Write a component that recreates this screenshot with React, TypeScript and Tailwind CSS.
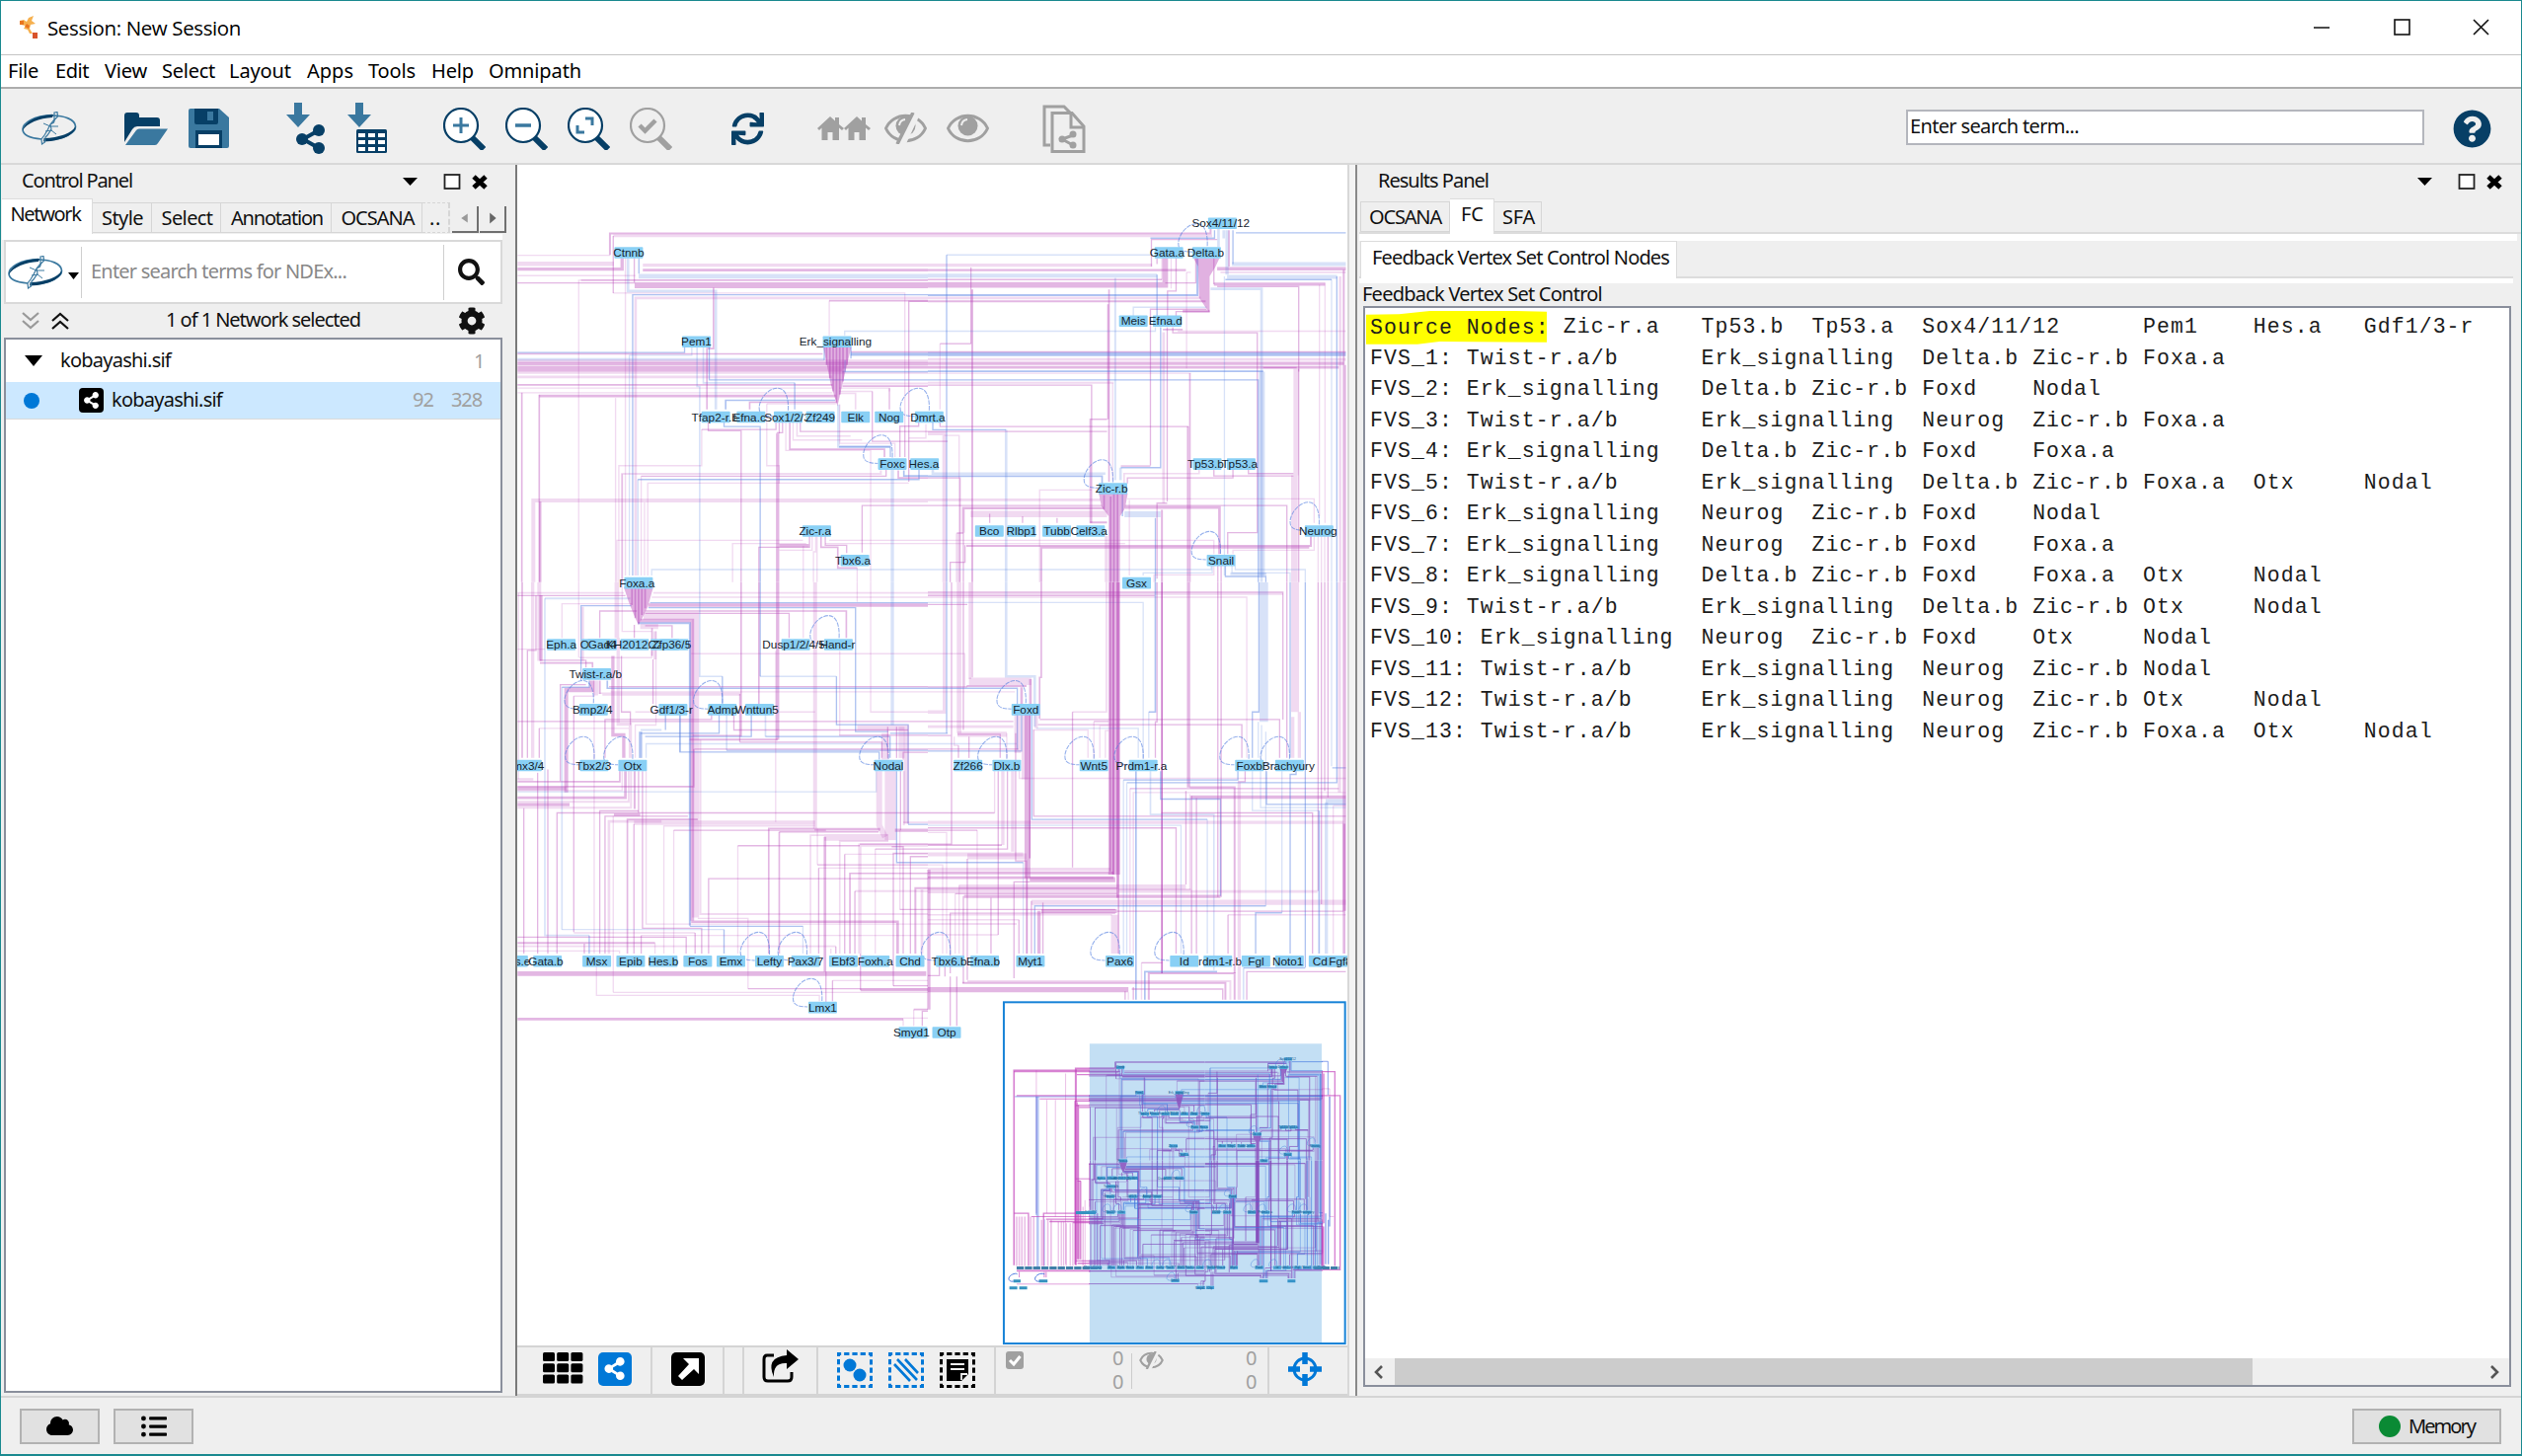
import React, { useLayoutEffect, useRef } from "react";
import { FaShareAlt, FaCloud, FaListUl, FaCog, FaSearch, FaQuestionCircle, FaSync } from "react-icons/fa";

/* ---------- text fitted to a fixed run length ---------- */
function T({ w, children, className = "" }: { w: number; children: string; className?: string }) {
  const ref = useRef<HTMLSpanElement>(null);
  useLayoutEffect(() => {
    const el = ref.current;
    if (!el) return;
    el.style.letterSpacing = "0px";
    const natural = el.getBoundingClientRect().width;
    el.style.letterSpacing = `${(w - natural) / Math.max(1, children.length)}px`;
  }, [w, children]);
  return (
    <span ref={ref} className={`inline-block whitespace-pre leading-none ${className}`}>
      {children}
    </span>
  );
}

/* ---------- network drawing data ---------- */
const NW = [
  "q6 M293 265V200H1290", "p8 M303 207H1290", "q3 M303 207V381", "p3 M303 381H1190V880", "p3 M12 266H293", "p14 M12 292H305",
  "q10 M12 308H330V275", "p3 M12 328H370", "q4 M12 350H365", "p10 M393 296H1290", "q8 M393 311H1290", "b14 M380 330H1290",
  "p4 M198 1290V342H1290", "q4 M205 342H1290", "q18 M368 357H1290", "p3 M340 275V1240", "b8 M348 275V375H615V735", "c4 M362 1240V386H1290",
  "p8 M371 1240V396H1290", "p3 M960 510V404", "q5 M960 404H1290", "q4 M1202 955V406H1290", "q5 M608 365V550H588V735",
  "c4 M381 275V322", "q4 M367 275V352", "b3 M1007 510V497H1290", "c4 M12 562H520V545", "q4 M12 566H940", "b4 M352 1240V570H542V545",
  "c10 M1025 567H1290", "q3 M1025 560H1290", "b8 M12 583H945", "p10 M12 588H1290", "q10 M12 596H1290", "q18 M12 612H1000", "q8 M1000 607H1290",
  "p5 M12 624H1290", "c3 M1000 620H1290", "p8 M12 636H970", "q5 M12 660H970", "p3 M12 670H970", "p3 M12 684H970", "q8 M78 694H980",
  "q5 M25 1290V684", "q5 M78 1290V690", "q5 M1000 664H1265V735", "p6 M1000 656H1290", "p3 M990 670H1143V680", "q4 M1143 670V735", "p5 M990 686H1040V735", "q4 M1091 680V832H1290",
  "p3 M990 680H1091", "c3 M595 545V645H1290", "b5 M577 545V654H855", "c4 M855 654V735", "b5 M558 545V665H566V1290", "c5 M645 735V707H978",
  "q5 M718 735V713H980", "p3 M770 718V906H808V960", "p3 M770 718H980", "b8 M988 720V848H1146", "c4 M990 849H1146V880", "p4 M992 720V838H1160V880",
  "q4 M798 775V796H572", "p4 M572 796V906H320V1290", "q10 M803 808V1290", "q4 M818 775V806H800", "q4 M808 775V808", "p4 M828 775V860H1086V1290", "q5 M840 775V856H1128V880",
  "p4 M850 775V828H1060", "p5 M862 775V816H1025", "q4 M872 775V802H1290", "p4 M1254 780V822H1202", "q4 M592 775V800H692V1290", "c4 M640 775V787H750V1290",
  "q3 M1175 880V786H1232V775", "p3 M1190 786V880", "p6 M330 1260V931H1117V920", "q4 M388 938H1133V915", "p3 M388 1240V938", "q5 M1170 920V943H1290",
  "c4 M378 948H1233V915", "b5 M378 1240V948", "c5 M1187 920V937H1290", "p4 M408 1240V959H1202", "b10 M1152 915V1290", "p12 M60 1290V1012H1290",
  "p3 M398 1240V1018", "q7 M81 1290V1015", "q4 M1060 1170V1027H1290", "p4 M314 1290V1133H880", "p3 M310 1290V700", "p3 M960 1133H1290", "p3 M666 1290V1143H890",
  "p3 M948 1143H1290", "q4 M746 1290V1154H900V1120", "q10 M808 1149H898", "p4 M908 1120V1163H808", "p4 M881 1290V1150", "p3 M912 1290V1168H919V1120",
  "p3 M923 1290V1120", "q5 M935 1120V1154H986V1217H1045", "q4 M948 1120V1148H1013V1172", "p4 M1045 1217V1290", "b3 M420 1240V1222H1290", "p3 M330 931V1290",
  "c4 M945 545V585", "c4 M1026 545V580", "c3 M1008 585V620",
];
const NE = [
  "q6 M0 200H860V185", "p8 M0 207H865", "c4 M937 198H1272", "c4 M677 214H872V190", "q3 M680 300V218H880", "b8 M900 190V215M884 185V240", "p10 M0 296H682", "q4 M697 275V293",
  "q7 M0 311H785", "b3 M57 265H677", "c4 M57 265V1290", "q3 M131 535V303", "q3 M37 535H131", "p3 M37 535V735", "q6 M135 1290V370", "b12 M0 328H697", "q5 M0 340H712", "p3 M712 275V340",
  "q17 M0 356H722V275", "q4 M722 350H815V275", "p4 M740 275V367", "q3 M755 275V375H729V450", "c6 M0 387H820V275", "p8 M0 396H830", "q6 M0 406H845", "q8 M857 436H775", "q4 M755 450V437H857", "b4 M625 450V424H848",
  "q4 M677 905V430H848", "c4 M697 325V450", "q5 M548 765V415", "q5 M551 370V955", "b6 M570 335V950", "b12 M925 293H1272", "c4 M928 190V293", "q10 M880 307H1272", "p5 M890 318H1272", "b10 M910 190V325", "q5 M916 190V300", "b12 M910 332H1245",
  "c3 M905 340H1228", "b4 M1228 340V1290", "q10 M870 354H1208", "q4 M870 275V354", "p3 M1208 350V1080", "p3 M1191 356V1060", "q4 M880 361H1128V620", "b8 M860 368H1015V1260", "p4 M787 318V610", "p3 M787 318H800",
  "b3 M0 497H692V485", "p3 M760 497H1272", "q4 M745 485V502H1002V1110H912V1175", "q5 M715 492H775", "c12 M0 567H1272", "q3 M0 560H1272", "p8 M0 583H1272", "q10 M0 595H1265", "q8 M0 607H1250", "c5 M0 619H1020", "p4 M0 625H800",
  "c4 M1244 330V1290", "p8 M1254 330V1290", "q6 M1265 310V600", "q12 M1268 600V1290", "q4 M1020 608H1122", "p16 M1120 612V935", "q3 M1128 612V1290", "c4 M0 645H1005V1290", "b18 M1016 620V1240", "p6 M0 654H565", "q4 M0 661H498V1080", "p4 M562 655V950",
  "b4 M902 330V1240", "q5 M797 625V1290", "q6 M791 787V1290", "q4 M37 775V787H793", "c4 M15 775V797H238", "b8 M238 797V1290", "q4 M0 802H545", "p12 M0 808H50V1290", "p3 M95 1290V814H50", "q3 M0 832H60", "q5 M494 1080V765H545", "c4 M708 485V912H587", "b8 M586 912V950",
  "q3 M587 907H677", "q4 M728 485V1015", "p8 M717 500V1020", "c5 M0 938H530V960", "b8 M15 915V930H540", "q4 M0 943H98V1290", "p3 M340 1290V980H498", "p5 M597 960V930H825V915", "q4 M607 960V943H928V915", "q3 M870 915V937H1112", "q3 M975 915V930H1112", "p20 M1115 935V1290",
  "p8 M0 1010H525", "p4 M607 1007H1175V1080", "q4 M0 1027H530", "q4 M600 1027H1092V1290", "q8 M108 1110V1035H535", "q8 M600 1033H887V1175", "p20 M130 1053H545", "q3 M188 1052V1080", "q3 M288 1060V1080", "q3 M393 1065V1080", "q6 M493 1079H545", "c3 M592 990V1060", "b18 M598 1054H708",
  "c4 M692 1065V1290", "q6 M712 1040V1290", "q4 M697 1250V1020H728", "p3 M613 1240V1010", "p3 M0 1133H870V1175", "p3 M0 1143H600", "q6 M117 1150H1165V1120", "q6 M345 1290V1155H1160", "p4 M928 1175V1163H1175V1120", "q3 M68 1290V1200H113V1148", "p10 M90 1112V1290", "q4 M108 1110V1290", "q3 M88 1111H108",
  "b3 M0 1222H862V1210", "b4 M655 1240V1232H865V1210", "p4 M688 1290V1238H870V1210", "c4 M905 1210V1243H1028V1290", "b8 M920 1235H1030", "b3 M935 1210V1222H1148V1290", "b3 M1102 1290V1232H925V1210", "q4 M882 1210V1290", "q4 M892 1210V1290", "p3 M1187 1120V1290", "p3 M1197 1120V1290", "p3 M1207 1120V1290", "q3 M1217 1120V1290", "p10 M543 1120V1290",
];
const SW = [
  "p5 M12 33H335", "q4 M12 41H340", "p12 M78 0V240", "q5 M26 0V535", "q4 M68 41V208H42V535", "p10 M58 0V535", "q10 M83 40V240", "q5 M80 246H240V260", "q3 M80 238H220V260", "p4 M15 33V600", "b5 M95 50V1075H230", "b6 M95 50H355", "c4 M230 1075V1130",
  "p4 M147 170V66H360", "q4 M262 170V88H375", "c4 M205 300V72H358", "p8 M210 75V240", "p3 M198 0V230", "p3 M12 204H95", "p5 M425 33H1290", "p4 M420 46H1290", "c4 M415 63H1290", "q10 M410 70H1290", "c4 M410 78H1040V455H1140", "q5 M400 88H1012V170", "q3 M400 95H838V170", "p3 M881 0V170",
  "p22 M395 103H553V1020", "q12 M385 117H543V1030", "c6 M378 125H536V1045", "c4 M536 1047H880", "b3 M880 1047V1130", "p16 M385 135H440", "q4 M482 170V133H400", "q4 M367 130V170", "p14 M314 0V170", "p4 M330 0V150H420",
  "b5 M566 0V287H635", "c4 M635 287V370", "q5 M692 0V470", "c4 M750 0V287", "b5 M750 287H982", "c4 M982 287V434H1200V735", "q10 M803 0V480", "p4 M808 395H917", "q5 M746 0V370", "p12 M917 0V750", "p3 M1045 0V60", "b10 M1152 0V435", "p4 M1086 0V395H1290", "p3 M540 218H1290",
  "p4 M992 210V465", "q6 M262 300V340", "p5 M270 343H690", "p3 M262 338H690", "q4 M688 340V487", "q4 M142 605V312H220", "c4 M147 320H230V300", "b5 M147 320V1057", "c5 M285 300V323H1290", "q4 M290 318H1290", "p4 M295 334H1290", "q14 M165 328H238V300", "q12 M160 322V640", "p4 M183 347H245V300", "q3 M183 347V1065",
  "p14 M250 300V345", "p3 M245 400V1130", "q10 M302 225V465H335V535", "p10 M318 170V432H355V535", "p3 M200 230H420V210", "q5 M421 140V225", "q4 M424 235V370", "p4 M433 150V435H370V535", "p10 M430 150V235", "q3 M355 435V395H328V225", "p3 M370 395H540",
  "q4 M12 424H1290", "q3 M278 535V418H602V400", "p4 M78 445H350", "q4 M78 445V535", "c4 M462 400V450", "c10 M386 455V535", "c4 M386 460H625V400", "b6 M450 450H386", "c4 M506 400V517H1112V540", "b6 M506 400V517", "b5 M648 400V512", "c4 M648 512H1290", "c4 M723 400V470H400", "b5 M766 400V470", "c4 M766 470H1145V535", "c3 M1145 460H1290", "b3 M403 535V492H1290",
  "q4 M670 400V450H1200", "q3 M545 467H690", "q6 M535 479H803", "q4 M688 487H1120V535", "p16 M1045 443H1195V735", "q4 M990 466H1290", "q4 M550 508H1290", "q4 M1185 540V518H1290", "q5 M548 508V622H12", "p22 M1130 460V540", "q4 M1138 440V535", "q4 M1165 440V535", "p18 M1180 440V535",
  "q5 M12 607H323V575", "p8 M12 600H60", "q10 M12 628H160", "b4 M12 638H1103V575", "p4 M12 634H330V575", "q8 M12 656H340V575", "p6 M12 668H350V575", "q10 M12 677H170", "p6 M12 686H357V575", "q6 M368 575V690", "q4 M380 575V702",
  "q4 M392 575V1053H572V1130", "p4 M403 575V1040H1290", "q4 M132 1130V702H1290", "q4 M262 1130V696H380", "q4 M278 1130V712H530", "p8 M290 1130V728H450", "p4 M303 1248V712", "q8 M305 708H385", "q5 M346 1130V722H560", "q4 M366 1130V736", "p14 M366 732H917", "p4 M457 1130V742H917", "q4 M487 755H950", "p3 M487 755V1130",
  "q5 M776 1130V750H915", "q5 M808 760H1110", "q5 M808 760V1130", "q8 M915 752H1115", "p3 M797 210V730", "p6 M568 480V1010H1290", "p18 M1112 575V740L1130 775", "p34 M1146 575V785", "q4 M1177 575V755", "p6 M1187 575V740", "c4 M1165 575V853H1290", "c3 M1200 737H1290", "p5 M1185 731H1290", "q10 M1160 755H1290", "p20 M945 777H1140",
  "p5 M903 1130V770H945", "q8 M947 775V1185", "q4 M950 1185V1280", "p5 M992 1130V788H1140", "p10 M1053 1130V800H1290", "q4 M1053 797H1290", "q4 M1150 805H1185V1130", "p3 M1100 1130V812", "q4 M1100 812H1290", "q3 M1155 1228V825H1290", "p4 M1007 828H1290", "q4 M1007 828V1130", "q4 M924 860H1290", "p3 M924 750V860", "q4 M928 1130V870", "p4 M928 870H1290", "q5 M1023 1130V886H1290", "q4 M593 1130V902H1290",
  "q3 M682 802H1053", "p4 M682 802V1130", "q4 M1038 1130V940", "p6 M1038 940H1290", "q4 M1207 1130V835H1290", "q6 M1222 1130V931H1290", "p8 M1242 1130V935", "p3 M1175 755V996", "q4 M1175 996H1290", "q8 M540 1033H1168V1130", "p4 M560 1023H713V1237", "q4 M713 1237H1290", "b4 M147 1057H640", "c4 M640 1057V1130", "p4 M183 1067H552", "q4 M552 1067V1130", "q4 M12 1080H525V1130", "p4 M388 1075H1290", "q4 M388 1075V1130",
  "q6 M12 1098H430", "p4 M430 1098V1130", "p5 M12 1108H980", "q4 M980 1108V1130", "p3 M965 1115V1130", "q4 M215 1100V1130", "p3 M12 1122H322V1130", "q4 M73 580V1130", "q4 M104 570V1130", "q4 M31 1130V688", "q14 M12 1191H1255", "p3 M252 1165V1257H930V1275", "p4 M303 1248H1290", "p3 M970 1212H1290", "q4 M970 1212V1275", "q4 M1155 1228H1290", "q8 M1055 1241H1290V1130", "q4 M1055 1130V1241",
  "q8 M12 1329H1185", "p4 M1185 1329V1350M1185 1326H1287V1350", "q8 M1262 875V1300", "q5 M1217 1300H1290", "p4 M1217 1300V1350", "q3 M1243 1350V1305H1290",
];
const SE = [
  "q4 M0 31H1080V418", "p6 M0 36H1080", "q4 M0 41H690", "p3 M0 46H970V535", "b4 M0 62H655V535", "q4 M0 68H75M75 68H120", "p10 M50 0V395H0", "c4 M57 0V460", "q4 M72 0V797H0", "p14 M95 0V460", "q3 M108 0V450", "p8 M128 0V295", "q3 M135 0V290", "p3 M0 218H112V320", "b8 M238 0V287H325V440", "q5 M345 0V290H340V415",
  "p22 M125 302H315", "q6 M118 316H300", "c4 M0 323H272V510", "q3 M0 319H120", "p3 M0 334H265", "q8 M285 320V370", "q8 M312 295V370", "q36 M567 0V890", "r6 M564 0V890", "r8 M578 0V960", "r3 M555 0V880", "p5 M543 0V395H440", "q3 M440 395V868",
  "c5 M692 0V395H672", "b4 M672 395V535", "q5 M712 0V1190", "r2 M712 0V1190", "q4 M697 0V425H692V535", "q10 M793 0V625", "q4 M882 0V958", "q4 M892 0V660", "c4 M1007 0V395H987V535", "b26 M1022 0V425", "b4 M1005 535V425M1015 530V435", "q4 M1092 0V535", "c4 M1102 0V535", "p24 M1117 0V395", "p10 M1110 410V535M1130 395V535", "c4 M1148 0V1172", "q4 M1187 0V940", "q4 M1197 0V980", "q4 M1207 0V635", "q4 M1217 0V655", "b3 M1228 0V560", "c4 M1230 565H1272", "c4 M1244 0V610H605", "p10 M1252 0V640", "q12 M1268 0V1000",
  "q4 M340 418H1070V535", "q4 M335 434H955V535", "p4 M320 450H487V535", "b4 M330 445H640V535", "q4 M505 424H550", "p4 M505 424V535M523 535V437H550M540 535V452H550", "p16 M90 463H240", "q4 M90 463H220V535", "p4 M240 460V535", "c4 M0 460H60", "q4 M0 424H260", "p8 M0 440H260", "q4 M0 467H70", "b4 M0 492H270", "q4 M0 508H275", "c4 M0 514H285V400", "q4 M125 470V535", "q4 M93 497V535", "p3 M80 470V497H93",
  "q18 M303 400V900", "p20 M295 400V600", "r2 M310 400V840", "c4 M316 400V722H850", "b4 M850 722V1130", "q4 M322 450V712H1272", "p20 M273 400V520", "p10 M258 575V820", "q4 M267 460V848H300V1130", "p10 M228 575V800", "q4 M214 575V1073", "p4 M214 1073H0", "p4 M203 575V702", "q4 M203 702H0", "q3 M242 575V812H0", "p4 M278 575V597H1272", "p10 M330 400V445",
  "c4 M595 602H943V575", "b4 M595 602V1130M605 612V1130", "q4 M615 628H1250", "p4 M615 628V1130M625 1130V640H1272", "q4 M943 607H965V575", "p10 M947 610V1270", "c5 M633 575V1270", "c4 M708 575V660H890V955", "q4 M892 660V958", "b5 M677 575V707H870V1180", "b4 M987 575V695H1190", "b4 M1012 575V686H1272", "c4 M1030 575V676H1272", "q10 M800 654H1272", "q6 M797 624H933V1190", "q4 M785 635V920M802 650V1130M817 657V1130", "p4 M797 645V935",
  "q4 M710 702H1170V1130", "p10 M0 731H1265", "b4 M0 740H770V1130", "q4 M0 748H755V1130", "q4 M0 755H150", "p4 M150 755V1130M0 762H57V1130", "q5 M0 800H225", "p12 M0 828H290", "c4 M0 853H290", "b4 M290 853V1130", "p4 M0 860H45V1130", "p18 M120 834H300", "p10 M0 874H555", "q8 M0 885H565", "q8 M0 899H565", "q16 M310 905H570", "q4 M262 1205V912H310", "q4 M120 1210V842",
  "p14 M95 927H785", "q8 M0 932H575", "p10 M0 942H575", "q4 M580 935H800", "p8 M580 941H1185", "q4 M83 948H575", "p4 M83 948V1130M95 922V1130", "q10 M110 956H890", "q4 M192 1130V960", "q4 M108 1220V955", "p16 M315 974H1272", "q4 M315 1130V970", "c4 M325 1130V985H1028", "b4 M1028 985V455", "q4 M0 996H570", "q12 M345 1001H575", "q4 M575 1001H1265", "q10 M338 1130V1000", "q4 M350 1130V975", "q4 M68 1190V1007H570", "p4 M0 1012H560", "q4 M913 1130V1012", "p4 M913 1012H1272", "c4 M997 1130V1006H1077", "b4 M1077 1006V575", "c4 M1102 1130V585H1120V575", "p4 M0 1027H277", "q4 M277 1027V1130", "p6 M0 1040H270",
  "c5 M1190 695V1130", "b10 M1212 670V1130", "p4 M1233 680V1130M1233 680H1272", "b16 M1210 668H1272", "q8 M1266 735V1130", "p22 M568 1012V1130", "q5 M580 960V1130", "q3 M302 900V1130", "q4 M0 1197H35V1165", "q4 M52 1165V1200", "q6 M105 1219H905V1270", "p6 M120 1214H920V1270", "q16 M0 1240H610", "q4 M600 1270V1245M625 1270V1232", "p4 M610 1248V1270", "q4 M620 1238H897V1270", "p4 M650 1270V1158", "q4 M650 1158H713", "c5 M660 1270V1185H880", "q6 M672 1270V1190H933V1270", "b5 M960 1270V1174", "c4 M960 1174H1148", "q4 M970 1270V1185H1272", "q4 M68 1200V1350M88 1200V1350", "q8 M4 875V1300",
];
const FANS: [number, string, string][] = [
  [0, "942,545 1027,545 1002,650 985,725 965,660", "M952 545V600M962 545V640M972 545V680M982 545V715M992 545V690M1002 545V650M1014 545V600"],
  [1, "808,275 887,275 875,300 857,330 857,440 845,425 825,395 822,300", ""],
  [1, "520,990 608,990 600,1035 585,1060 584,1290 550,1290 550,1060 528,1030", "M556 1000V1290M566 990V1290M577 990V1290M536 995V1040"],
  [2, "335,15 425,15 408,75 380,132 366,100 350,60", "M360 20V70M370 20V110M380 20V125M390 20V100M400 20V80"],
];
const QUADS = [
  { x: 520, y: 170, w: 420, h: 420, edges: NW },
  { x: 940, y: 170, w: 424, h: 420, edges: NE },
  { x: 520, y: 590, w: 420, h: 480, edges: SW },
  { x: 940, y: 590, w: 424, h: 480, edges: SE },
];
/* quadrant, box x, y, label, label x */
const NODES: [number, number, number, string, number?][] = [
  [0, 350, 258, "Ctnnb"], [0, 556, 529, "Pem1"], [0, 984, 529, "Erk_signalling", 979], [0, 615, 758, "Tfap2-r.b", 612], [0, 722, 758, "Efna.c", 717], [0, 835, 758, "Sox1/2/3", 832], [0, 933, 758, "Zf249"],
  [0, 1040, 758, "Elk"], [0, 1142, 758, "Nog"], [0, 1264, 758, "Dmrt.a", 1260], [0, 1152, 901, "Foxc"], [0, 1250, 901, "Hes.a", 1248], [0, 922, 1105, "Zic-r.a", 917], [0, 1038, 1194, "Tbx6.a", 1032], [0, 380, 1263, "Foxa.a", 375],
  [1, 896, 169, "Sox4/11/12", 891], [1, 733, 258, "Gata.a", 728], [1, 848, 258, "Delta.b", 845], [1, 625, 466, "Meis"], [1, 728, 466, "Efna.d", 723], [1, 563, 976, "Zic-r.b", 559], [1, 850, 901, "Tp53.b", 845], [1, 953, 901, "Tp53.a", 948],
  [1, 187, 1105, "Bco"], [1, 285, 1105, "Rlbp1"], [1, 392, 1105, "Tubb"], [1, 495, 1105, "Celf3.a", 490], [1, 1190, 1105, "Neurog", 1187], [1, 892, 1194, "Snail"], [1, 635, 1263, "Gsx"],
  [2, 145, 190, "Eph.a"], [2, 250, 190, "Otx4", 240], [2, 270, 190, "Gad4"], [2, 368, 190, "KH2012.C2", 372], [2, 460, 190, "C2orf38", 472], [2, 488, 190, "Zfp36/5", 480], [2, 858, 190, "Dusp1/2/4/5", 852], [2, 988, 190, "Hand-r", 985],
  [2, 253, 280, "Twist-r.a/b", 249], [2, 243, 388, "Bmp2/4", 240], [2, 485, 388, "Gdf1/3-r", 480], [2, 635, 388, "Admp"], [2, 748, 388, "Wnttun5", 740], [2, 42, 558, "Dmx3/4", 32], [2, 245, 558, "Tbx2/3", 243], [2, 362, 558, "Otx"], [2, 1140, 558, "Nodal"],
  [2, 0, 1153, "Hes.e", 5], [2, 103, 1153, "Gata.b", 98], [2, 253, 1153, "Msx"], [2, 356, 1153, "Epib"], [2, 455, 1153, "Hes.b"], [2, 560, 1153, "Fos"], [2, 661, 1153, "Emx"], [2, 778, 1153, "Lefty"], [2, 888, 1153, "Pax3/7"], [2, 1003, 1153, "Ebf3"], [2, 1100, 1153, "Foxh.a"], [2, 1206, 1153, "Chd"],
  [2, 940, 1294, "Lmx1"], [2, 1215, 1370, "Smyd1", 1210], [2, 1317, 1370, "Otp"],
  [3, 298, 388, "Foxd"], [3, 122, 558, "Zf266"], [3, 240, 558, "Dlx.b"], [3, 505, 558, "Wnt5"], [3, 655, 558, "Prdm1-r.a", 650], [3, 978, 558, "Foxb"], [3, 1100, 558, "Brachyury", 1097],
  [3, 68, 1153, "Tbx6.b", 65], [3, 173, 1153, "Efna.b", 168], [3, 312, 1153, "Myt1"], [3, 584, 1153, "Pax6"], [3, 882, 1153, "Prdm1-r.b", 877], [3, 780, 1153, "Id"], [3, 998, 1153, "Fgl"], [3, 1100, 1153, "Noto1", 1095], [3, 1202, 1153, "Cdx"], [3, 1260, 1153, "Fgf8", 1255],
];
const LOOPS: [number, number, number][] = [
  [0, 835, 758], [0, 1264, 758], [0, 1152, 901], [1, 850, 258], [1, 563, 976], [1, 890, 1194], [1, 1190, 1105], [2, 990, 190], [2, 243, 388], [2, 635, 388], [2, 245, 558], [2, 362, 558], [2, 1140, 558],
  [2, 778, 1153], [2, 892, 1153], [2, 938, 1294], [3, 68, 1153], [3, 298, 388], [3, 240, 558], [3, 505, 558], [3, 655, 558], [3, 976, 558], [3, 1100, 558], [3, 583, 1153], [3, 778, 1153],
];
/* stroke, opacity in the main view, stroke and opacity in the overview */
const COLORS: Record<string, [string, number, string, number]> = {
  p: ["#b43cb4", 0.19, "#a52cb0", 0.4], q: ["#b43cb4", 0.37, "#a02cb0", 0.8], r: ["#b030b0", 0.5, "#a020a8", 0.9],
  b: ["#4f7be0", 0.22, "#3d66e0", 0.45], c: ["#4f7be0", 0.46, "#3d66e0", 0.75],
};

function Network({ mini = false }: { mini?: boolean }) {
  return (
    <g>
      {QUADS.map((q, i) => (
        <svg key={i} x={q.x} y={q.y} width={q.w} height={q.h} viewBox={`0 0 ${q.w * 3} ${q.h * 3}`} fill="none">
          {q.edges.map((e, k) => {
            const s = e.indexOf(" ");
            const c = COLORS[e[0]];
            const w = Number(e.slice(1, s));
            return <path key={k} d={e.slice(s + 1)} stroke={mini ? c[2] : c[0]} strokeOpacity={mini ? c[3] : c[1]} strokeWidth={Math.max(w, mini ? 9 : 4)} />;
          })}
          {FANS.filter((f) => f[0] === i).map((f, k) => (
            <g key={k}>
              <polygon points={f[1]} fill="#b43cb4" fillOpacity={mini ? 0.85 : 0.4} />
              <path d={f[2]} stroke="#a934b4" strokeOpacity={0.38} strokeWidth={5} />
            </g>
          ))}
        </svg>
      ))}
      {LOOPS.map(([q, x, y], i) => (
        <path
          key={i}
          transform={`translate(${QUADS[q].x + x / 3} ${QUADS[q].y + y / 3}) scale(.33333)`}
          d="M0 -20C2 -58 -8 -88 -32 -88C-60 -88 -88 -55 -88 -28C-88 -8 -75 -3 -44 -2"
          fill="none" stroke="#4f7be0" strokeOpacity={0.6} strokeWidth={mini ? 8 : 3.2} strokeDasharray={mini ? undefined : "14 3"}
        />
      ))}
      {NODES.map(([q, x, y, label, lx], i) => {
        const cx = QUADS[q].x + x / 3, cy = QUADS[q].y + y / 3;
        return (
          <g key={i}>
            <rect x={cx - 14.5} y={cy - 5.8} width={29} height={11.6} fill={mini ? "#4fa6d2" : "#89d0f5"} rx={0.8} />
            <text x={QUADS[q].x + (lx ?? x) / 3} y={cy + 4.1} textAnchor="middle" fontFamily="Liberation Sans, sans-serif" fontSize={11.8} fill={mini ? "#053a66" : "#16242e"}>{label}</text>
          </g>
        );
      })}
    </g>
  );
}

const OUTER = [
  "q5 M52 818V225H282", "q4 M52 229H375", "p3 M120 225V660", "p3 M209 235V815", "q6 M240 818V220H360", "q4 M243 238H375", "c3 M55 305H282", "q4 M60 302H282", "b8 M124 305V830", "c3 M120 665V305", "q3 M130 312H282", "p3 M152 315V660M178 315V670",
  "r4 M238 318V815", "q4 M244 322V800M248 330V800", "p8 M252 560V800", "q4 M238 318H282M240 332H282M250 338H282", "q3 M240 555H282M245 562H255V800", "p3 M282 508V640M268 620V820",
  "q4 M52 660H96V820", "q3 M105 670H285", "b3 M145 678V820", "q4 M142 820V660H282M150 678H320M160 685H320M230 688H320", "p5 M60 670V820M68 670V820M76 670V820M85 670V820M103 670V820M112 670V820M136 680V820M155 680V820M165 680V820", "p4 M187 685V820M196 685V820M203 685V820M211 690V820M223 690V820M231 690V820M262 640V820",
  "q5 M60 835H282V838", "q4 M240 805H345M245 812H345", "q3 M68 838V855M150 838V855M144 838V855", "p4 M60 875H282",
  "c3 M988 198H1007V300", "q4 M988 229H1028V820", "r4 M994 235V690", "c3 M985 235V815", "q4 M988 302H1044V832H900", "q5 M988 690V820M993 700V820", "c4 M1000 660V815M1008 680V815", "p3 M988 281H1012V670H1025", "c4 M1012 305V700",
];

function NetworkCanvas() {
  return (
    <svg className="block h-[1197px] w-[841px]" viewBox="524 167 841 1197">
      <Network />
      <rect x="1017" y="1016" width="346" height="346" fill="#fff" stroke="#1883d7" strokeWidth="2" />
      <g transform="translate(955.3 1009.7) scale(.2825)"><Network mini /></g>
      <g transform="translate(1010 1010) scale(.33333)" fill="none">
        {OUTER.map((e, k) => {
          const s = e.indexOf(" ");
          const c = COLORS[e[0]];
          const blue = e[0] === "b" || e[0] === "c";
          return <path key={k} d={e.slice(s + 1)} stroke={blue ? c[2] : "#c03cb8"} strokeOpacity={c[3] * 0.8} strokeWidth={Number(e.slice(1, s))} />;
        })}
        <path d="M60 826H318M965 826H1042" stroke="#3f7fa8" strokeWidth="9" strokeDasharray="22 3" />
        <path d="M50 866H72M128 866H154M38 887H62M68 887H92M240 658H300M798 866H824M884 866H908" stroke="#3592c0" strokeWidth="9" />
        <path d="M62 845C55 840 38 848 36 858C36 866 42 868 50 867M145 845C132 840 118 848 116 858C116 866 122 868 130 867" stroke="#4f7be0" strokeWidth="3" />
      </g>
      <rect x="1104" y="1058" width="235.300" height="303" fill="#3795db" fillOpacity=".3" />
    </svg>
  );
}

/* ---------- icons ---------- */
const NAVY = "#073f66";
const STEEL = "#3a789f";
const GREY = "#a0a0a0";

const NdexLogo = () => (
  <svg className="block h-[34px] w-[56px]" viewBox="0 0 56 34" fill="none">
    <path d="M31 4C43 4 54 8 54.500 15C55 21 44 28 24 29" stroke={STEEL} strokeWidth="1.700" />
    <path d="M54.500 15C55 22 43 30 22 30.500L22.500 27C38 26.500 51 22 54.500 15Z" fill={NAVY} />
    <path d="M20 28C10 27 1 24 1 18C1 12 12 4 31 3.500" stroke={STEEL} strokeWidth="1.700" />
    <path d="M1 19C3 10 16 3.500 32 3L31 6C18 6.500 5 12 1 19Z" fill={NAVY} />
    <path d="M33 1L36 0.500L36.500 5L33.500 8L32.500 11L29 13L30 18L26 24L24 26L23.500 31L20.500 33L20 28L23 24L26 19L29 13L33 8Z" stroke={STEEL} strokeWidth="1.200" />
    <path d="M22 12L29 15L37 15M24 20L30 19L35 23" stroke={STEEL} strokeWidth="1" />
  </svg>
);
const DownArrow = ({ x }: { x: number }) => <path d={`M${x - 4} 0H${x + 4}V12H${x + 12}L${x} 25L${x - 12} 12H${x - 4}Z`} fill={STEEL} />;
const Mag = ({ grey, children }: { grey?: boolean; children: React.ReactNode }) => (
  <svg className="block h-[43px] w-[43px]" viewBox="0 0 43 43" fill="none">
    <path d="M28 29L39 40" stroke={grey ? GREY : NAVY} strokeWidth="6" strokeLinecap="square" />
    <circle cx="18" cy="18" r="17" fill={grey ? "#efefef" : "#fff"} stroke={grey ? GREY : NAVY} strokeWidth="2.200" />
    {children}
  </svg>
);
const EyeShape = ({ slash }: { slash?: boolean }) => (
  <svg className="block h-[32px] w-[43px]" viewBox="0 0 43 32" fill="none">
    <path d="M1.500 16C9 -1 34 -1 41.500 16C34 33 9 33 1.500 16Z" stroke={GREY} strokeWidth="3" />
    <circle cx="21.500" cy="13.500" r="10" fill={GREY} />
    <path d="M15 13A7 7 0 0 1 21 7" stroke="#efefef" strokeWidth="2" />
    {slash && <><path d="M33 0L17 34" stroke="#efefef" strokeWidth="7" /><path d="M29 0L13 32" stroke={GREY} strokeWidth="3.500" /></>}
  </svg>
);
const House = "M0 13L13 1L18 5.500V2H22V9L27 13L25 15L22 12.500V25H15.500V17H10.500V25H4.500V12.500L2 15Z";

const TOOLS: { ml: string; el: React.ReactNode }[] = [
  { ml: "ml-[21px]", el: <NdexLogo /> },
  { ml: "ml-[48px]", el: (
    <svg className="block h-[34px] w-[44px]" viewBox="0 0 44 34"><path d="M0 31V4Q0 1 3 1H12Q15 1 15 4V6H33Q36 6 36 9V15H13Q10 15 8 18Z" fill={NAVY} /><path d="M1 34L12 19Q13 17.500 15 17.500H44L34 32Q33 34 31 34Z" fill={STEEL} /></svg>) },
  { ml: "ml-[21px]", el: (
    <svg className="block h-[40px] w-[41px]" viewBox="0 0 41 40"><path d="M2 0H31L41 9V38Q41 40 39 40H2Q0 40 0 38V2Q0 0 2 0Z" fill={STEEL} /><path d="M6 0H30V14Q30 16 28 16H8Q6 16 6 14ZM7 22H34V40H7Z" fill={NAVY} /><path d="M19 3H25V12H19Z" fill={STEEL} /><path d="M10 26H31V37H10Z" fill="#fff" /></svg>) },
  { ml: "ml-[58px]", el: (
    <svg className="block h-[52px] w-[40px]" viewBox="0 0 40 52"><DownArrow x={12} /><path d="M33 28L17 37L33 46" stroke={NAVY} strokeWidth="4" fill="none" /><circle cx="33" cy="28" r="6" fill={NAVY} /><circle cx="16" cy="37" r="6" fill={NAVY} /><circle cx="33" cy="46" r="6" fill={NAVY} /></svg>) },
  { ml: "ml-[22px]", el: (
    <svg className="block h-[52px] w-[41px]" viewBox="0 0 41 52"><DownArrow x={12} /><rect x="9" y="27" width="31" height="24" rx="1.500" fill={NAVY} /><path d="M11 31h7v4h-7zM21 31h7v4h-7zM31 31h7v4h-7zM11 38h7v4h-7zM21 38h7v4h-7zM31 38h7v4h-7zM11 45h7v4h-7zM21 45h7v4h-7zM31 45h7v4h-7z" fill="#fff" /></svg>) },
  { ml: "ml-[56px]", el: <Mag><path d="M10 18H26M18 10V26" stroke={STEEL} strokeWidth="3" /></Mag> },
  { ml: "ml-[20px]", el: <Mag><path d="M10 18H26" stroke={STEEL} strokeWidth="3.500" /></Mag> },
  { ml: "ml-[20px]", el: <Mag><path d="M18 11H25V18M10 18V25H17" stroke={STEEL} strokeWidth="3" /></Mag> },
  { ml: "ml-[20px]", el: <Mag grey><path d="M10 18L15.500 23.500L26 13" stroke={GREY} strokeWidth="4.500" /></Mag> },
  { ml: "ml-[60px]", el: <FaSync className="block size-[33px] text-[#073f66]" /> },
  { ml: "ml-[54px]", el: <svg className="block h-[26px] w-[54px]" viewBox="0 0 54 26" fill={GREY}><path d={House} /><path d={House} transform="translate(27 0)" /></svg> },
  { ml: "ml-[14px]", el: <EyeShape slash /> },
  { ml: "ml-[20px]", el: <EyeShape /> },
  { ml: "ml-[54px]", el: (
    <svg className="block h-[49px] w-[44px]" viewBox="0 0 44 49" fill="none" stroke={GREY} strokeWidth="3"><path d="M8 41H2V2H22L28 8" /><path d="M10 8.500H30L42 22V47.500H10Z" fill="#efefef" /><path d="M29 9V23H42" /><path d="M31 31L20 35L31 41" /><g fill={GREY} stroke="none"><circle cx="31" cy="30" r="3.500" /><circle cx="20" cy="35" r="3.500" /><circle cx="31" cy="41" r="3.500" /></g></svg>) },
];

const Share = ({ className }: { className: string }) => (
  <span className={`flex items-center justify-center bg-current ${className}`}><FaShareAlt className="size-[68%] text-white" /></span>
);
const DashBox = ({ color, children }: { color: string; children: React.ReactNode }) => (
  <svg className="block size-[36px]" viewBox="0 0 36 36" fill="none"><rect x="1.500" y="1.500" width="33" height="33" stroke={color} strokeWidth="3" strokeDasharray="5.250 3" strokeDashoffset="2.600" />{children}</svg>
);

function HeaderButtons() {
  return (
    <svg className="block h-[18px] w-[86px]" viewBox="0 0 86 18"><path d="M0 5H15L7.500 13Z" fill="#000" /><rect x="42.500" y="2" width="15" height="14" fill="#fff" stroke="#222" strokeWidth="1.800" /><path d="M72 4L84 15M84 4L72 15" stroke="#000" strokeWidth="5" /></svg>
  );
}

function Tab({ w, tw, label, active, cls }: { w: string; tw: number; label: string; active?: boolean; cls?: string }) {
  return (
    <div className={`flex shrink-0 justify-center ${w} ${active ? "h-[36px] border-t border-r border-[#dcdcdc] bg-white pt-[5px]" : "h-[31px] border-t border-r border-b border-[#d6d6d6] bg-[#efefef] pt-[5px]"} ${cls ?? ""}`}>
      <T w={tw}>{label}</T>
    </div>
  );
}

/* ---------- results text ---------- */
const RESULTS: string[][] = [
  ["Source Nodes: Zic-r.a", "Tp53.b", "Tp53.a", "Sox4/11/12", "Pem1", "Hes.a", "Gdf1/3-r"],
  ["FVS_1: Twist-r.a/b", "Erk_signalling", "Delta.b", "Zic-r.b", "Foxa.a"],
  ["FVS_2: Erk_signalling", "Delta.b", "Zic-r.b", "Foxd", "Nodal"],
  ["FVS_3: Twist-r.a/b", "Erk_signalling", "Neurog", "Zic-r.b", "Foxa.a"],
  ["FVS_4: Erk_signalling", "Delta.b", "Zic-r.b", "Foxd", "Foxa.a"],
  ["FVS_5: Twist-r.a/b", "Erk_signalling", "Delta.b", "Zic-r.b", "Foxa.a", "Otx", "Nodal"],
  ["FVS_6: Erk_signalling", "Neurog", "Zic-r.b", "Foxd", "Nodal"],
  ["FVS_7: Erk_signalling", "Neurog", "Zic-r.b", "Foxd", "Foxa.a"],
  ["FVS_8: Erk_signalling", "Delta.b", "Zic-r.b", "Foxd", "Foxa.a", "Otx", "Nodal"],
  ["FVS_9: Twist-r.a/b", "Erk_signalling", "Delta.b", "Zic-r.b", "Otx", "Nodal"],
  ["FVS_10: Erk_signalling", "Neurog", "Zic-r.b", "Foxd", "Otx", "Nodal"],
  ["FVS_11: Twist-r.a/b", "Erk_signalling", "Neurog", "Zic-r.b", "Nodal"],
  ["FVS_12: Twist-r.a/b", "Erk_signalling", "Neurog", "Zic-r.b", "Otx", "Nodal"],
  ["FVS_13: Twist-r.a/b", "Erk_signalling", "Neurog", "Zic-r.b", "Foxa.a", "Otx", "Nodal"],
];
const tabbed = (cells: string[]) => cells.reduce((s, c) => (s ? s.padEnd((Math.floor(s.length / 8) + 1) * 8) + c : c), "");

const MENU: [string, number][] = [["File", 31], ["Edit", 34], ["View", 43], ["Select", 54], ["Layout", 63], ["Apps", 47], ["Tools", 48], ["Help", 43], ["Omnipath", 94]];
const MENU_ML = ["ml-[7px]", "ml-[17px]", "ml-[16px]", "ml-[15px]", "ml-[14px]", "ml-[16px]", "ml-[15px]", "ml-[16px]", "ml-[15px]"];

function ControlPanel() {
  return (
    <aside className="flex w-[521px] shrink-0 flex-col bg-[#efefef] pl-[1px]">
      <div className="flex h-[34px] shrink-0 items-center pb-[2px] pl-[20px]">
        <T w={112}>Control Panel</T>
        <div className="mt-[2px] ml-[274px]"><HeaderButtons /></div>
      </div>
      <div className="flex h-[36px] shrink-0 items-start">
        <Tab w="w-[92px]" tw={71} label="Network" active cls="pr-[3px]" />
        <div className="flex pt-[4px]">
          <Tab w="w-[60px]" tw={42} label="Style" cls="pl-[1px]" />
          <Tab w="w-[70px]" tw={52} label="Select" cls="pl-[2px]" />
          <Tab w="w-[112px]" tw={93} label="Annotation" cls="pl-[2px]" />
          <Tab w="w-[92px]" tw={74} label="OCSANA" cls="pl-[2px]" />
          <Tab w="w-[28px]" tw={12} label=".." cls="border-r-2 border-dashed" />
        </div>
        <div className="mt-[8px] ml-[2px] flex gap-[1px]">
          {["M17 8L10 13L17 18Z", "M11 7L18 13L11 19Z"].map((d, i) => (
            <div key={i} className="h-[27px] w-[27px] border-r-2 border-b-2 border-[#707070] bg-[#efefef]">
              <svg className="block h-[24px] w-[25px]" viewBox="0 0 27 26"><path d={d} fill={i ? "#666" : "#999"} /></svg>
            </div>
          ))}
        </div>
      </div>
      <div className="h-[6px] w-[507px] shrink-0 bg-white" />
      <div className="ml-[2px] flex h-[65px] w-[505px] shrink-0 items-center border-2 border-[#d9d9d9] bg-white">
        <div className="ml-[2px]"><NdexLogo /></div>
        <svg className="mt-[8px] ml-[5px] h-[7px] w-[11px]" viewBox="0 0 11 7"><path d="M0 0H11L5.500 7Z" /></svg>
        <div className="ml-[2px] h-[52px] w-[1px] bg-[#cfcfcf]" />
        <div className="ml-[9px] pb-[1px] text-[#888]"><T w={259}>Enter search terms for NDEx...</T></div>
        <div className="ml-[98px] h-[56px] w-[1px] bg-[#cfcfcf]" />
        <FaSearch className="ml-[14px] size-[27px]" />
      </div>
      <div className="flex h-[34px] shrink-0 items-center">
        <svg className="ml-[20px] h-[18px] w-[48px]" viewBox="0 0 48 18" fill="none" strokeWidth="2.200"><path d="M1 1L9 8L17 1M1 9L9 16L17 9" stroke="#999" /><path d="M31 9L39 2L47 9M31 17L39 10L47 17" stroke="#111" /></svg>
        <div className="ml-[98px] pb-[2px]"><T w={197}>1 of 1 Network selected</T></div>
        <FaCog className="ml-[99px] size-[28px]" />
      </div>
      <div className="ml-[2px] h-[1069px] w-[505px] shrink-0 border-2 border-[#8a8f9c] bg-white">
        <div className="flex h-[43px] items-center">
          <svg className="ml-[19px] h-[11px] w-[18px]" viewBox="0 0 18 11"><path d="M0 0H18L9 11Z" /></svg>
          <div className="ml-[18px] pb-[2px]"><T w={112}>kobayashi.sif</T></div>
          <div className="mr-[18px] ml-auto text-[#a0a0a0]"><T w={9}>1</T></div>
        </div>
        <div className="flex h-[38px] items-center border-b border-[#dadada] bg-[#cce8ff]">
          <div className="ml-[18px] size-[16px] rounded-full bg-[#0078d7]" />
          <Share className="ml-[40px] size-[25px] rounded-[4px] text-black" />
          <div className="ml-[8px] pb-[2px]"><T w={112}>kobayashi.sif</T></div>
          <div className="ml-auto pb-[1px] text-[#a0a0a0]"><T w={21}>92</T></div>
          <div className="mr-[19px] ml-[18px] pb-[1px] text-[#a0a0a0]"><T w={31}>328</T></div>
        </div>
      </div>
    </aside>
  );
}

function CanvasToolbar() {
  const sep = "h-full border-r-2 border-[#d4d4d4]";
  return (
    <div className="flex h-[51px] w-[841px] items-stretch border-t-2 border-b-2 border-[#d4d4d4] bg-[#efefef] text-[#a0a0a0]">
      <div className={`flex w-[137px] pt-[5px] pl-[26px] ${sep}`}>
        <svg className="block h-[32px] w-[41px]" viewBox="0 0 41 32">{[0, 1, 2].map((r) => [0, 1, 2].map((c) => <rect key={`${r}${c}`} x={c * 14.200} y={r * 11.300} width="12" height="9" rx="1.500" />))}</svg>
        <Share className="ml-[15px] size-[34px] rounded-[5px] text-[#0078d7]" />
      </div>
      <div className={`flex w-[73px] pt-[5px] pl-[19px] ${sep}`}>
        <svg className="block size-[34px]" viewBox="0 0 34 34"><rect width="34" height="34" rx="5" /><path d="M12 6H28V22L23 17L11 28L7 24L18 12Z" fill="#fff" /></svg>
      </div>
      <div className={`w-[20px] ${sep}`} />
      <div className={`w-[75px] pt-[2px] pl-[18px] ${sep}`}>
        <svg className="block h-[34px] w-[38px]" viewBox="0 0 38 34"><path d="M12 6H5Q2 6 2 10V28Q2 32 6 32H26Q30 32 30 28V23" fill="none" stroke="#000" strokeWidth="3" /><path d="M25 0L37 10L25 20V14Q11 13 12 28Q3 8 25 6Z" /></svg>
      </div>
      <div className={`flex w-[180px] gap-[16px] pt-[5px] pl-[19px] ${sep}`}>
        <DashBox color="#0078d7"><circle cx="13" cy="13" r="6.500" fill="#0078d7" /><circle cx="23" cy="23" r="6.500" fill="#0078d7" /></DashBox>
        <DashBox color="#0078d7"><path d="M6 12L22 29M9 7L29 28M17 7L30 21" stroke="#0078d7" strokeWidth="2.600" /></DashBox>
        <DashBox color="#000"><path d="M7 7H29V22L22 29H7Z" fill="#000" /><path d="M11 12H25M11 17H25M22 28V22H28" stroke="#efefef" strokeWidth="1.800" /></DashBox>
      </div>
      <div className={`flex w-[277px] ${sep}`}>
        <svg className="mt-[4px] ml-[10px] block size-[18px]" viewBox="0 0 18 18"><rect width="18" height="18" rx="3" fill="#a0a0a0" /><path d="M4 9L8 13L14.500 5" stroke="#fff" strokeWidth="3" fill="none" /></svg>
        <div className="mt-[1px] ml-[90px] flex w-[11px] flex-col gap-[4px]"><T w={11}>0</T><T w={11}>0</T></div>
        <div className="mt-[6px] ml-[8px] h-[36px] w-[1px] bg-[#ccc]" />
        <svg className="mt-[4px] ml-[7px] block h-[18px] w-[25px]" viewBox="0 0 43 32" fill="none"><path d="M1.500 16C9 -1 34 -1 41.500 16C34 33 9 33 1.500 16Z" stroke={GREY} strokeWidth="3.500" /><circle cx="21.500" cy="14" r="9" fill={GREY} /><path d="M33 0L17 34" stroke="#efefef" strokeWidth="7" /><path d="M29 0L13 32" stroke={GREY} strokeWidth="4" /></svg>
        <div className="mt-[1px] ml-[83px] flex w-[11px] flex-col gap-[4px]"><T w={11}>0</T><T w={11}>0</T></div>
      </div>
      <svg className="mt-[5px] ml-[19px] block size-[34px]" viewBox="0 0 34 34" fill="none" stroke="#0078d7"><circle cx="17" cy="17" r="11" strokeWidth="3" /><path d="M17 0V12M17 22V34M0 17H12M22 17H34" strokeWidth="5.500" /></svg>
    </div>
  );
}

function ResultsPanel() {
  return (
    <section className="flex w-[1181px] shrink-0 flex-col border-l-2 border-[#8a8a8a] bg-[#efefef] pl-[2px]">
      <div className="flex h-[33px] shrink-0 items-center pb-[2px] pl-[19px]">
        <T w={112}>Results Panel</T>
        <div className="mt-[3px] ml-[941px]"><HeaderButtons /></div>
      </div>
      <div className="flex h-[37px] shrink-0 items-end border-b-2 border-[#dcdcdc] pl-[1px]">
        <Tab w="w-[91px]" tw={73} label="OCSANA" cls="border-l" />
        <Tab w="w-[45px]" tw={23} label="FC" active cls="-mb-[2px] pl-[1px]" />
        <Tab w="w-[48px]" tw={33} label="SFA" cls="pl-[2px]" />
      </div>
      <div className="h-[7px] w-[1173px] shrink-0 bg-white" />
      <div className="flex h-[38px] w-[1169px] shrink-0 items-end border-b-2 border-[#dcdcdc] pl-[1px]">
        <div className="-mb-[2px] h-[38px] w-[321px] border border-b-0 border-[#dcdcdc] bg-white pt-[6px] pl-[11px]"><T w={301}>Feedback Vertex Set Control Nodes</T></div>
      </div>
      <div className="h-[5px] w-[1169px] shrink-0 bg-white" />
      <div className="flex h-[23px] shrink-0 items-center pb-[2px] pl-[3px]"><T w={243}>Feedback Vertex Set Control</T></div>
      <div className="ml-[4px] flex h-[1095px] w-[1163px] shrink-0 flex-col border-2 border-[#8a8f9c] bg-white">
        <div className="grow pt-[4px] pl-[5px] font-['Liberation_Mono',monospace] text-[21.5px] leading-[31.500px] tracking-[1.080px] whitespace-pre text-[#1c1c1c]">
          {RESULTS.map((r, i) => {
            const line = tabbed(r);
            return i === 0 ? (
              <div key={i} className="flex h-[31.500px] items-center"><span className="-ml-[4px] inline-block bg-[#ffff00] py-[4px] pl-[4px] leading-[26px] [clip-path:polygon(0_12%,18%_10%,36%_0,75%_0,98.500%_3%,98.500%_94%,40%_92%,28%_100%,0_100%)]">{line.slice(0, 13)}</span><span>{line.slice(13)}</span></div>
            ) : (
              <div key={i}>{line}</div>
            );
          })}
        </div>
        <div className="flex h-[27px] items-center bg-[#efefef]">
          <svg className="ml-[9px] h-[14px] w-[10px]" viewBox="0 0 10 14"><path d="M8 1L2 7L8 13" fill="none" stroke="#555" strokeWidth="2.600" /></svg>
          <div className="ml-[11px] h-full w-[869px] bg-[#cccccc]" />
          <svg className="ml-[240px] h-[14px] w-[10px]" viewBox="0 0 10 14"><path d="M2 1L8 7L2 13" fill="none" stroke="#555" strokeWidth="2.600" /></svg>
        </div>
      </div>
    </section>
  );
}

export default function App() {
  return (
    <div className="flex h-[1475px] w-[2555px] flex-col overflow-hidden border-t border-r border-b-2 border-l border-[#1b8a90] bg-[#efefef] font-['Noto_Sans',sans-serif] text-[20px] leading-none text-[#111]">
      <header className="flex h-[54px] shrink-0 items-center bg-white">
        <svg className="ml-[18px] h-[24px] w-[20px]" viewBox="0 0 20 24"><path d="M1 5L5 4L8 6L10 2L15 0L13 5L17 8L12 9L11 13L14 18L11 18L9 14L5 13L7 10L2 9Z" fill="#f6b04e" /><path d="M1 5h4v4h-4zM8 8l3 2-1 3-4-2z" fill="#e8751f" /><path d="M14 17h5v6h-5z" fill="#d8532c" /></svg>
        <div className="ml-[9px] font-['Open_Sans',sans-serif] text-[20.500px] text-black"><T w={196}>Session: New Session</T></div>
        <svg className="mr-[32px] ml-auto h-[20px] w-[178px]" viewBox="-8 0 178 20" fill="none" stroke="#111" strokeWidth="1.600"><path d="M-8 10H8M154 2L169 17M169 2L154 17" /><rect x="74" y="2" width="15" height="15" /></svg>
      </header>
      <nav className="flex h-[33px] shrink-0 items-center border-t border-[#c4c4c4] bg-white text-black">
        {MENU.map(([m, w], i) => <div key={m} className={MENU_ML[i]}><T w={w}>{m}</T></div>)}
      </nav>
      <div className="flex h-[79px] shrink-0 items-center border-t-2 border-b-2 border-t-[#adadad] border-b-[#d8d8d8] pt-[5px]">
        {TOOLS.map((t, i) => <div key={i} className={`shrink-0 ${t.ml}`}>{t.el}</div>)}
        <div className="mb-[3px] ml-auto flex h-[36px] w-[525px] items-center border-2 border-[#b4b6bd] bg-white pb-[1px] pl-[2px]"><T w={171}>Enter search term...</T></div>
        <FaQuestionCircle className="mr-[30px] ml-[29px] size-[39px] text-[#073f66]" />
      </div>
      <main className="flex h-[1249px] shrink-0 border-b-2 border-[#d4d4d4]">
        <ControlPanel />
        <div className="flex w-[843px] shrink-0 flex-col border-l-2 border-[#7a7a7a] bg-white">
          <NetworkCanvas />
          <CanvasToolbar />
        </div>
        <div className="w-[8px] shrink-0 border-l-2 border-[#d8d8d8] bg-[#f4f4f4]" />
        <ResultsPanel />
      </main>
      <footer className="flex grow items-center">
        <div className="ml-[19px] flex h-[36px] w-[81px] items-center justify-center border-2 border-[#b2b2b2] bg-[#e1e1e1]"><FaCloud className="size-[27px] text-black" /></div>
        <div className="ml-[14px] flex h-[36px] w-[81px] items-center justify-center border-2 border-[#b2b2b2] bg-[#e1e1e1]"><FaListUl className="size-[26px] text-black" /></div>
        <div className="mr-[20px] ml-auto flex h-[36px] w-[151px] items-center border-2 border-[#b2b2b2] bg-[#e1e1e1] pl-[25px]">
          <div className="size-[22px] rounded-full bg-[#0a8a34]" />
          <div className="ml-[8px]"><T w={67}>Memory</T></div>
        </div>
      </footer>
    </div>
  );
}
